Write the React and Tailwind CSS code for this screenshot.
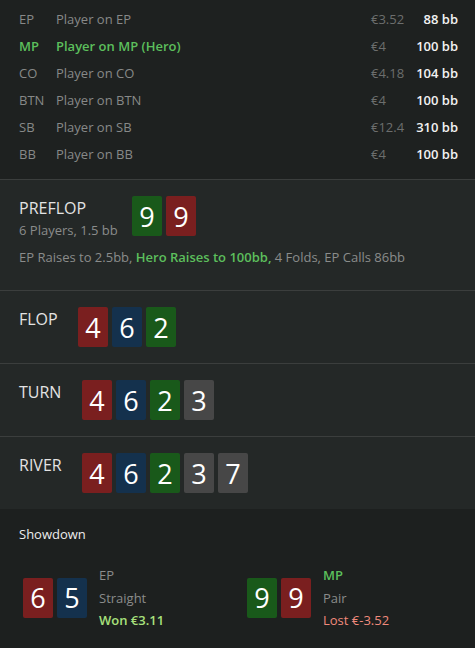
import React from "react";

const players = [
  { pos: "EP", name: "Player on EP", amount: "€3.52", stack: "88 bb" },
  { pos: "MP", name: "Player on MP (Hero)", amount: "€4", stack: "100 bb", hero: true },
  { pos: "CO", name: "Player on CO", amount: "€4.18", stack: "104 bb" },
  { pos: "BTN", name: "Player on BTN", amount: "€4", stack: "100 bb" },
  { pos: "SB", name: "Player on SB", amount: "€12.4", stack: "310 bb" },
  { pos: "BB", name: "Player on BB", amount: "€4", stack: "100 bb" },
];

const suitColor = {
  r: "bg-[#7a1f1f]",
  b: "bg-[#14314d]",
  g: "bg-[#19591a]",
  x: "bg-[#474747]",
};

function Card({ rank, suit }) {
  return (
    <div
      className={
        "w-[30px] h-[40px] rounded-[2px] flex items-center justify-center text-white text-[27px] leading-none " +
        suitColor[suit]
      }
    >
      {rank}
    </div>
  );
}

function Cards({ list }) {
  return (
    <div className="flex gap-1">
      {list.map((c, i) => (
        <Card key={i} rank={c[0]} suit={c[1]} />
      ))}
    </div>
  );
}

function Street({ label, labelWidth, cards }) {
  return (
    <div className="bg-[#242827] border-t border-[#3b3e3d] pl-[19px] py-4 flex items-start">
      <div className={"mt-[2px] text-[16px] leading-5 text-[#e3e3e3] " + labelWidth}>{label}</div>
      <Cards list={cards} />
    </div>
  );
}

function Hand({ cards, pos, hand, result, won, hero, className }) {
  return (
    <div className={"flex items-center " + className}>
      <Cards list={cards} />
      <div className="ml-3 text-[13px] leading-[22.5px]">
        <div className={hero ? "text-[#5cbf5c] font-semibold" : "text-[#8a8c8b]"}>{pos}</div>
        <div className="text-[#8a8c8b]">{hand}</div>
        <div className={won ? "text-[#a8e07c] font-semibold" : "text-[#f08a7c]"}>{result}</div>
      </div>
    </div>
  );
}

export default function App() {
  return (
    <div
      className="w-[475px] h-[648px] overflow-hidden bg-[#1e2120]"
      style={{ fontFamily: '"Open Sans", "Noto Sans", sans-serif' }}
    >
      <div className="pl-[19px] pr-[17px] pt-[6px] pb-[11px] text-[13px]">
        {players.map((p) => (
          <div key={p.pos} className="flex items-center h-[27px]">
            <div className={"w-[37px] " + (p.hero ? "text-[#5cbf5c] font-semibold" : "text-[#878988]")}>
              {p.pos}
            </div>
            <div className={"flex-1 " + (p.hero ? "text-[#5cbf5c] font-semibold" : "text-[#878988]")}>
              {p.name}
            </div>
            <div className="w-[40px] text-[#6c6e6d]">{p.amount}</div>
            <div className="w-[47px] text-right text-[#f2f2f2] font-semibold">{p.stack}</div>
          </div>
        ))}
      </div>

      <div className="bg-[#242827] border-t border-[#3b3e3d] pl-[19px] pt-4 pb-6">
        <div className="flex items-start">
          <div className="w-[113px] mt-[2px]">
            <div className="text-[16px] leading-5 text-[#e3e3e3]">PREFLOP</div>
            <div className="text-[13px] leading-[18px] mt-[3px] text-[#8a8c8b]">6 Players, 1.5 bb</div>
          </div>
          <Cards list={["9g", "9r"]} />
        </div>
        <div className="mt-[9px] text-[13px] leading-[18px] text-[#8a8c8b]">
          EP Raises to 2.5bb, <span className="text-[#5cbf5c] font-semibold">Hero Raises to 100bb,</span> 4
          Folds, EP Calls 86bb
        </div>
      </div>

      <Street label="FLOP" labelWidth="w-[59px]" cards={["4r", "6b", "2g"]} />
      <Street label="TURN" labelWidth="w-[63px]" cards={["4r", "6b", "2g", "3x"]} />
      <Street label="RIVER" labelWidth="w-[63px]" cards={["4r", "6b", "2g", "3x", "7x"]} />

      <div className="bg-[#1d201f] pt-4 pb-4">
        <div className="pl-[19px] text-[13px] leading-[18px] text-[#ededed]">Showdown</div>
        <div className="flex pl-[23px] mt-[21px]">
          <Hand className="w-[224px]" cards={["6r", "5b"]} pos="EP" hand="Straight" result="Won €3.11" won />
          <Hand cards={["9g", "9r"]} pos="MP" hand="Pair" result="Lost €-3.52" hero />
        </div>
      </div>
    </div>
  );
}
